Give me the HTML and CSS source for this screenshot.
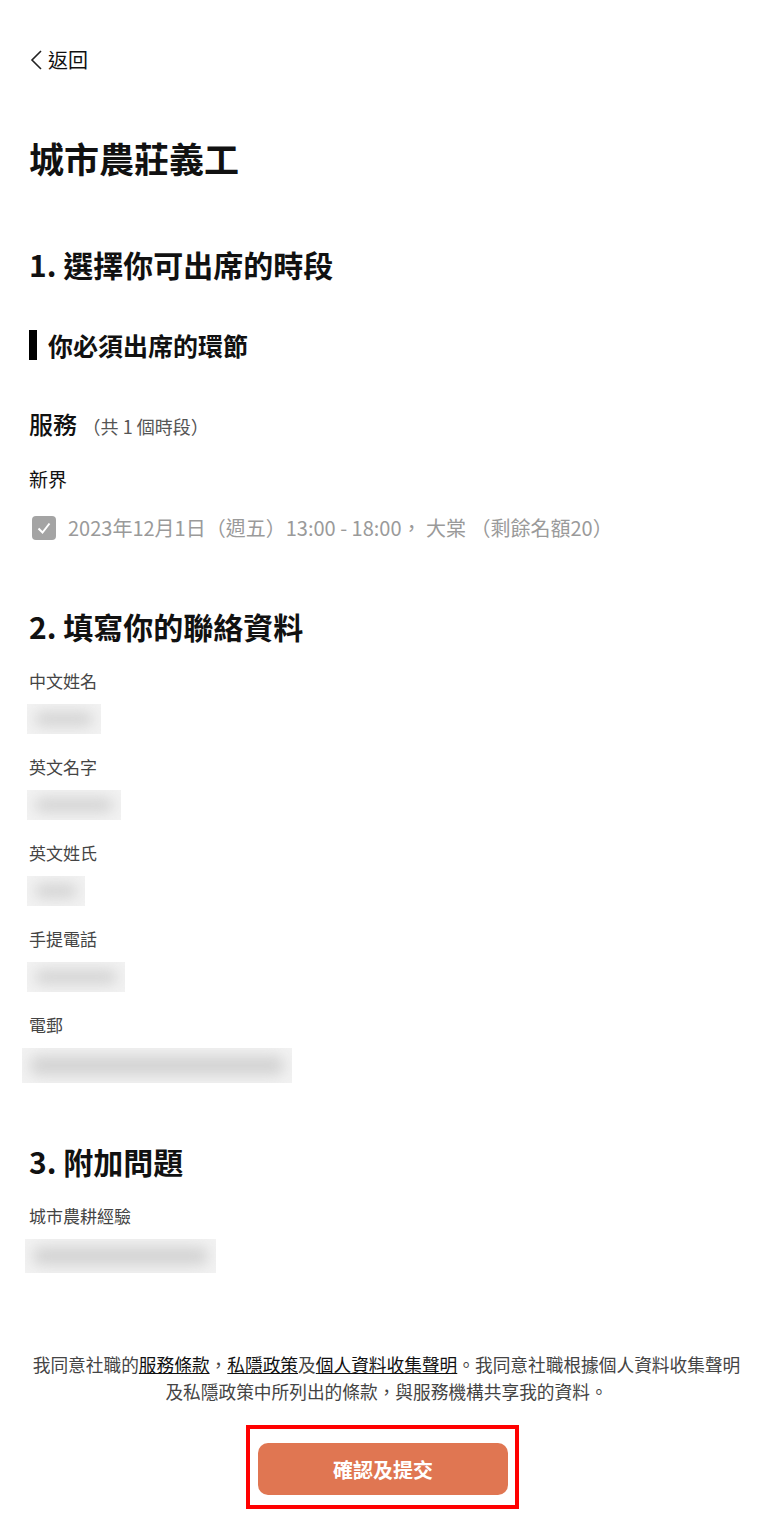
FILE: index.html
```html
<!DOCTYPE html>
<html lang="zh-Hant">
<head>
    <meta charset="UTF-8">
    <meta name="viewport" content="width=device-width, initial-scale=1.0">
    <title>城市農莊義工</title>
    <link rel="stylesheet" href="styles.css">
</head>
<body>

    <main class="page">
        <a class="back" href="#">
            <svg class="back-icon" width="14" height="22" viewBox="0 0 14 22"><path d="M11 2 L2 11 L11 20" fill="none" stroke="#222" stroke-width="1.6"/></svg>
            返回
        </a>

        <h1 class="title">城市農莊義工</h1>

        <h2 class="step">1. 選擇你可出席的時段</h2>

        <h3 class="section">你必須出席的環節</h3>

        <div class="service">
            <span class="service-name">服務</span>
            <span class="service-count">（共 1 個時段）</span>
        </div>

        <div class="region">新界</div>

        <label class="slot">
            <span class="checkbox">
                <svg width="16" height="16" viewBox="0 0 16 16"><path d="M2.5 8.5 L6.5 12.5 L13.5 3.5" fill="none" stroke="#fff" stroke-width="2"/></svg>
            </span>
            2023年12月1日（週五）13:00 - 18:00， 大棠 （剩餘名額20）
        </label>

        <h2 class="step step-contact">2. 填寫你的聯絡資料</h2>

        <div class="field">
            <div class="field-label">中文姓名</div>
            <div class="blur-box" style="width: 74px;"></div>
        </div>
        <div class="field">
            <div class="field-label">英文名字</div>
            <div class="blur-box" style="width: 94px;"></div>
        </div>
        <div class="field">
            <div class="field-label">英文姓氏</div>
            <div class="blur-box" style="width: 58px;"></div>
        </div>
        <div class="field">
            <div class="field-label">手提電話</div>
            <div class="blur-box" style="width: 98px;"></div>
        </div>
        <div class="field field-email">
            <div class="field-label">電郵</div>
            <div class="blur-box" style="width: 270px;"></div>
        </div>

        <h2 class="step step-extra">3. 附加問題</h2>

        <div class="field field-extra">
            <div class="field-label">城市農耕經驗</div>
            <div class="blur-box" style="width: 191px;"></div>
        </div>

        <p class="terms">我同意社職的<a href="#">服務條款</a>，<a href="#">私隱政策</a>及<a href="#">個人資料收集聲明</a>。我同意社職根據個人資料收集聲明<br>及私隱政策中所列出的條款，與服務機構共享我的資料。</p>

        <div class="submit-wrap">
            <button class="submit" type="button">確認及提交</button>
        </div>
    </main>

</body>
</html>
```

FILE: styles.css
```css
/* Basic styling for the page */
body {
    font-family: "Noto Sans CJK TC", "Noto Sans", sans-serif;
    margin: 0;
    padding: 0;
    background-color: #fff;
    color: #111;
}
.page {
    padding: 45px 29px 0;
}
.back {
    display: flex;
    align-items: center;
    gap: 4px;
    font-size: 20px;
    line-height: 30px;
    color: #111;
    text-decoration: none;
    margin-left: 1px;
}
.title {
    font-size: 35px;
    line-height: 44px;
    font-weight: 700;
    margin: 61px 0 0;
}
.step {
    font-size: 30px;
    line-height: 40px;
    font-weight: 700;
    margin: 64px 0 0;
}
.section {
    font-size: 25px;
    line-height: 30px;
    font-weight: 700;
    margin: 46px 0 0;
    padding-left: 11px;
    border-left: 8px solid #000;
}
.service {
    margin-top: 47px;
    line-height: 34px;
}
.service-name {
    font-size: 24px;
    font-weight: 500;
}
.service-count {
    font-size: 18px;
    color: #555;
    margin-left: 2px;
}
.region {
    font-size: 19px;
    line-height: 26px;
    margin-top: 22px;
}
.slot {
    display: flex;
    align-items: center;
    gap: 12px;
    font-size: 20px;
    line-height: 30px;
    color: #9a9a9a;
    margin-top: 21px;
    padding-left: 3px;
}
.checkbox {
    width: 24px;
    height: 24px;
    border-radius: 4px;
    background-color: #a4a4a4;
    display: flex;
    align-items: center;
    justify-content: center;
}
.step-contact {
    margin-top: 63px;
}
.field {
    margin-top: 21px;
}
.step + .field {
    margin-top: 23px;
}
.field-label {
    font-size: 17px;
    line-height: 24px;
    color: #444;
}
.blur-box {
    height: 30px;
    margin-top: 11px;
    margin-left: -2px;
    background-color: #f2f2f2;
    position: relative;
    overflow: hidden;
}
.blur-box::after {
    content: "";
    position: absolute;
    left: 8px;
    right: 8px;
    top: 8px;
    bottom: 8px;
    background-color: #d2d2d2;
    border-radius: 8px;
    filter: blur(7px);
}
.field-email .blur-box {
    height: 35px;
    margin-left: -7px;
}
.step-extra {
    margin-top: 58px;
}
.field-extra .blur-box {
    height: 34px;
    margin-left: -4px;
}
.terms {
    font-size: 17.7px;
    line-height: 27px;
    color: #444;
    text-align: center;
    margin: 78px -20px 0;
}
.terms a {
    color: #111;
    text-decoration: underline;
}
.submit-wrap {
    width: 250px;
    margin: 20px auto 0;
    padding: 14px 7px 10px 8px;
    border: 4px solid #f00;
    position: relative;
    left: -4px;
}
.submit {
    width: 250px;
    height: 52px;
    display: block;
    border: none;
    border-radius: 10px;
    background-color: #e07652;
    color: #fff;
    font-family: inherit;
    font-size: 20px;
    font-weight: 700;
    cursor: pointer;
}
```
